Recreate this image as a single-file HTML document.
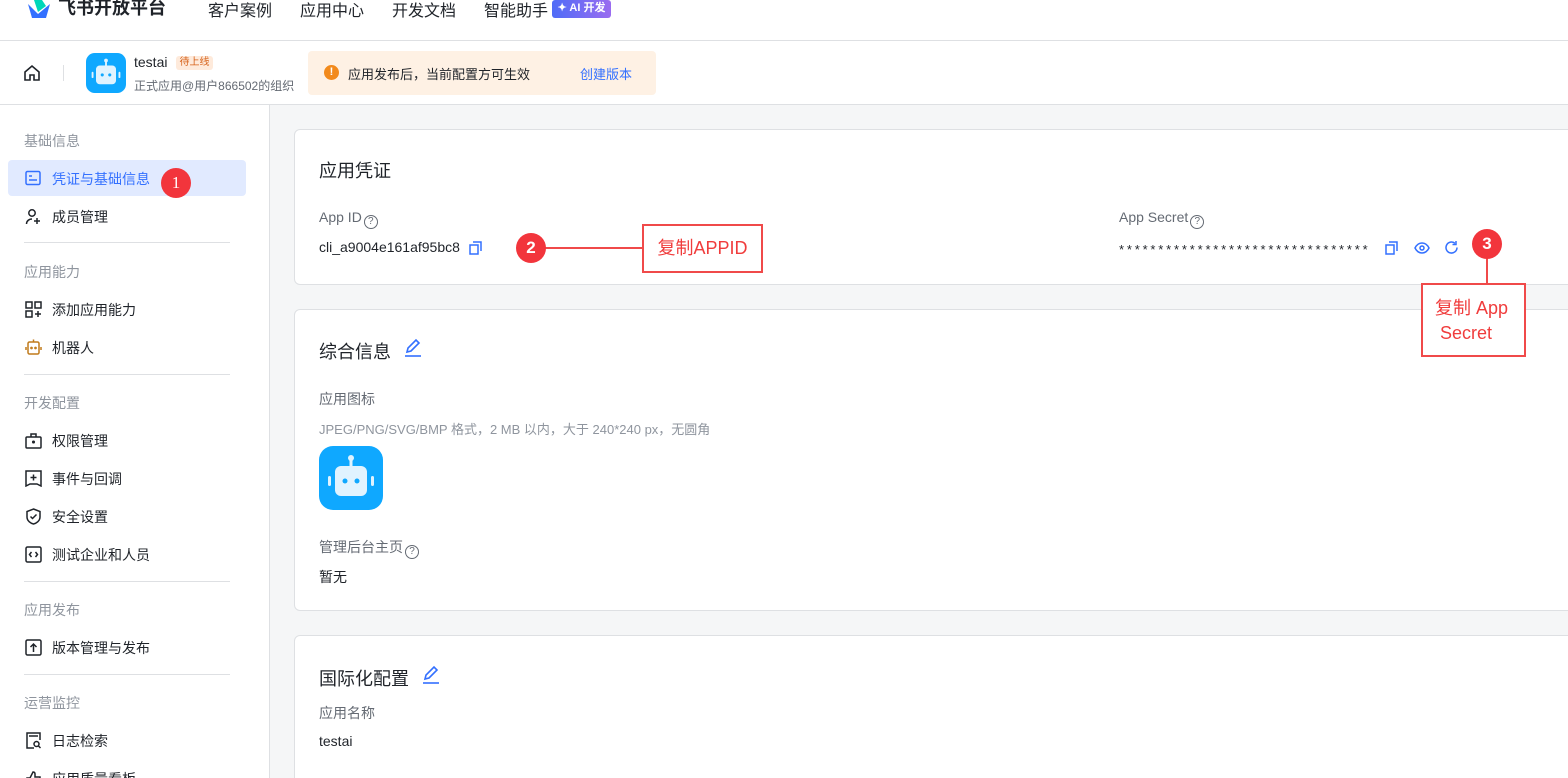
<!DOCTYPE html>
<html style="width:1568px;height:778px;overflow:hidden"><head><meta charset="utf-8"><style>
*{box-sizing:border-box;margin:0;padding:0}
body{width:1568px;height:778px;overflow:hidden;background:#f5f6f7;font-family:"Liberation Sans","Noto Sans CJK SC",sans-serif;color:#1f2329;position:relative}
.a{position:absolute;white-space:nowrap}
.top{position:absolute;left:0;top:0;width:1568px;height:41px;background:#fff;border-bottom:1px solid #dee0e3}
.bar{position:absolute;left:0;top:41px;width:1568px;height:64px;background:#fff;border-bottom:1px solid #dee0e3}
.side{position:absolute;left:0;top:105px;width:270px;height:673px;background:#fff;border-right:1px solid #dee0e3;overflow:hidden}
.card{position:absolute;left:294px;width:1290px;background:#fff;border:1px solid #dee0e3;border-radius:6px}
.sec{font-size:14px;color:#8f959e}
.it{font-size:14px;color:#1f2329}
.hr{position:absolute;left:24px;width:206px;height:1px;background:#dee0e3}
.lbl{font-size:14px;color:#646a73}
.q{display:inline-block;width:14px;height:14px;border:1.3px solid #646a73;border-radius:50%;font-size:10px;line-height:12px;text-align:center;vertical-align:-2px;margin-left:2px}
.red{position:absolute;width:30px;height:30px;border-radius:50%;background:#f2353c;color:#fff;font-weight:bold;font-size:17px;text-align:center;line-height:30px}
.box{position:absolute;border:2px solid #f04a4a;background:#fff;color:#f03c3c;font-size:18px}
svg.ic{position:absolute}
</style></head><body>
<div class="top">
 <svg class="a" style="left:26px;top:0" width="26" height="20" viewBox="0 0 26 20"><path d="M2 4 L12 14 L24 4 L20 18 L6 18Z" fill="#3370ff"/><path d="M8 0 L16 0 L20 6 L12 12Z" fill="#00d6b9"/></svg>
 <div class="a" style="left:58px;top:-6px;font-size:18px;font-weight:bold;color:#1f2329">飞书开放平台</div>
 <div class="a" style="left:208px;top:-3px;font-size:16px">客户案例</div>
 <div class="a" style="left:300px;top:-3px;font-size:16px">应用中心</div>
 <div class="a" style="left:392px;top:-3px;font-size:16px">开发文档</div>
 <div class="a" style="left:484px;top:-3px;font-size:16px">智能助手</div>
 <div class="a" style="left:552px;top:0;width:59px;height:18px;background:linear-gradient(90deg,#4f6cf7,#9a6cf0);border-radius:3px;color:#fff;font-size:11px;font-weight:bold;line-height:17px;text-align:center">✦ AI 开发</div>
</div>
<div class="bar">
 <svg class="ic" style="left:23px;top:23px" width="18" height="18" viewBox="0 0 18 18" fill="none" stroke="#1f2329" stroke-width="1.6"><path d="M2 8 L9 2 L16 8 V16 H11 V11 H7 V16 H2Z"/></svg>
 <div class="a" style="left:63px;top:24px;width:1px;height:16px;background:#dee0e3"></div>
 <svg class="ic" style="left:86px;top:12px" width="40" height="40" viewBox="0 0 64 64"><rect width="64" height="64" rx="14" fill="#0fa8ff"/><line x1="32" y1="12" x2="32" y2="20" stroke="#dff3ff" stroke-width="3"/><circle cx="32" cy="12" r="3" fill="#dff3ff"/><rect x="16" y="20" width="32" height="30" rx="6" fill="#e0f3ff"/><rect x="9" y="30" width="3" height="10" rx="1.5" fill="#e0f3ff"/><rect x="52" y="30" width="3" height="10" rx="1.5" fill="#e0f3ff"/><circle cx="26" cy="35" r="2.5" fill="#0fa8ff"/><circle cx="38" cy="35" r="2.5" fill="#0fa8ff"/></svg>
 <div class="a" style="left:134px;top:13px;font-size:14px">testai</div>
 <div class="a" style="left:176px;top:15px;width:37px;height:14px;background:#feeadb;color:#d6621a;font-size:10px;line-height:14px;text-align:center;border-radius:3px">待上线</div>
 <div class="a" style="left:134px;top:36px;font-size:12px;color:#646a73">正式应用@用户866502的组织</div>
 <div class="a" style="left:308px;top:10px;width:348px;height:44px;background:#fef1e4;border-radius:4px"></div>
 <div class="a" style="left:324px;top:24px;width:15px;height:15px;border-radius:50%;background:#f28a1c;color:#fff;font-size:11px;font-weight:bold;text-align:center;line-height:15px">!</div>
 <div class="a" style="left:348px;top:23px;font-size:13px">应用发布后，当前配置方可生效</div>
 <div class="a" style="left:580px;top:23px;font-size:13px;color:#3370ff">创建版本</div>
</div>
<div class="side">
 <div class="a sec" style="left:24px;top:26px">基础信息</div>
 <div class="a" style="left:8px;top:55px;width:238px;height:36px;background:#e1eaff;border-radius:4px"></div>
 <svg class="ic" style="left:25px;top:65px" width="16" height="16" viewBox="0 0 16 16" fill="none" stroke="#3370ff" stroke-width="1.5"><rect x="1" y="1.5" width="14" height="13" rx="1.5"/><path d="M4 6h3M4 10h8"/></svg>
 <div class="a it" style="left:52px;top:64px;color:#3370ff">凭证与基础信息</div>
 <div class="a it" style="left:52px;top:102px">成员管理</div>
 <svg class="ic" style="left:25px;top:103px" width="17" height="17" viewBox="0 0 17 17" fill="none" stroke="#1f2329" stroke-width="1.5"><circle cx="7" cy="5" r="3.2"/><path d="M1.5 16c0-3 2.5-5 5.5-5M12 10v6M9 13h6"/></svg>
 <div class="hr" style="top:137px"></div>
 <div class="a sec" style="left:24px;top:157px">应用能力</div>
 <svg class="ic" style="left:25px;top:196px" width="17" height="17" viewBox="0 0 17 17" fill="none" stroke="#1f2329" stroke-width="1.5"><rect x="1" y="1" width="6" height="6"/><rect x="10" y="1" width="6" height="6"/><rect x="1" y="10" width="6" height="6"/><path d="M13 10v6M10 13h6"/></svg>
 <div class="a it" style="left:52px;top:195px">添加应用能力</div>
 <svg class="ic" style="left:25px;top:234px" width="17" height="17" viewBox="0 0 17 17" fill="none" stroke="#c07a1a" stroke-width="1.5"><rect x="3" y="3" width="11" height="12" rx="1.5"/><path d="M8.5 0.5v2.5M1 8v3M16 8v3"/><circle cx="6.5" cy="9" r=".6"/><circle cx="10.5" cy="9" r=".6"/></svg>
 <div class="a it" style="left:52px;top:233px">机器人</div>
 <div class="hr" style="top:269px"></div>
 <div class="a sec" style="left:24px;top:288px">开发配置</div>
 <svg class="ic" style="left:25px;top:327px" width="17" height="17" viewBox="0 0 17 17" fill="none" stroke="#1f2329" stroke-width="1.5"><rect x="1" y="5" width="15" height="11" rx="1"/><path d="M6 5V2h5v3"/><circle cx="8.5" cy="10" r=".8" fill="#1f2329"/></svg>
 <div class="a it" style="left:52px;top:326px">权限管理</div>
 <svg class="ic" style="left:25px;top:365px" width="17" height="17" viewBox="0 0 17 17" fill="none" stroke="#1f2329" stroke-width="1.5"><path d="M1 1h15v15l-4-2H5l-4 2Z"/><path d="M8.5 4.5v6M5.5 7.5h6"/></svg>
 <div class="a it" style="left:52px;top:364px">事件与回调</div>
 <svg class="ic" style="left:25px;top:403px" width="17" height="17" viewBox="0 0 17 17" fill="none" stroke="#1f2329" stroke-width="1.5"><path d="M8.5 1 L15 3.5 V9 C15 13 11 15.5 8.5 16 C6 15.5 2 13 2 9 V3.5Z"/><path d="M5.5 8.5l2 2 4-4"/></svg>
 <div class="a it" style="left:52px;top:402px">安全设置</div>
 <svg class="ic" style="left:25px;top:441px" width="17" height="17" viewBox="0 0 17 17" fill="none" stroke="#1f2329" stroke-width="1.5"><rect x="1" y="1" width="15" height="15" rx="1.5"/><path d="M6.5 6l-2 2.5 2 2.5M10.5 6l2 2.5-2 2.5"/></svg>
 <div class="a it" style="left:52px;top:440px">测试企业和人员</div>
 <div class="hr" style="top:476px"></div>
 <div class="a sec" style="left:24px;top:495px">应用发布</div>
 <svg class="ic" style="left:25px;top:534px" width="17" height="17" viewBox="0 0 17 17" fill="none" stroke="#1f2329" stroke-width="1.5"><rect x="1" y="1" width="15" height="15" rx="1.5"/><path d="M8.5 13V5M5.5 8l3-3 3 3"/></svg>
 <div class="a it" style="left:52px;top:533px">版本管理与发布</div>
 <div class="hr" style="top:569px"></div>
 <div class="a sec" style="left:24px;top:588px">运营监控</div>
 <svg class="ic" style="left:25px;top:627px" width="17" height="17" viewBox="0 0 17 17" fill="none" stroke="#1f2329" stroke-width="1.5"><path d="M9 16H2V1h13v7"/><path d="M4 4h9"/><circle cx="11.5" cy="12" r="2.5"/><path d="M13.5 14l2 2"/></svg>
 <div class="a it" style="left:52px;top:626px">日志检索</div>
 <svg class="ic" style="left:25px;top:665px" width="17" height="17" viewBox="0 0 17 17" fill="none" stroke="#1f2329" stroke-width="1.5"><path d="M2 8h3v8H2zM5 8l3-6c1.5 0 2 1 2 2v3h5v4l-2 5H5"/></svg>
 <div class="a it" style="left:52px;top:664px">应用质量看板</div>
 <div class="red" style="left:161px;top:63px;font-family:'Liberation Serif',serif;font-weight:normal">1</div>
</div>

<div class="card" style="top:129px;height:156px">
 <div class="a" style="left:24px;top:27px;font-size:18px">应用凭证</div>
 <div class="a lbl" style="left:24px;top:79px">App ID<span class="q">?</span></div>
 <div class="a" style="left:24px;top:109px;font-size:14px">cli_a9004e161af95bc8</div>
 <svg class="ic" style="left:174px;top:111px" width="13" height="14" viewBox="0 0 13 14" fill="none" stroke="#3370ff" stroke-width="1.5"><rect x="1" y="4" width="8" height="9"/><path d="M4 1h8v9"/></svg>
 <div class="a lbl" style="left:824px;top:79px">App Secret<span class="q">?</span></div>
 <div class="a" style="left:824px;top:112px;font-size:13px;letter-spacing:2.8px;color:#1f2329">********************************</div>
 <svg class="ic" style="left:1090px;top:111px" width="13" height="14" viewBox="0 0 13 14" fill="none" stroke="#3370ff" stroke-width="1.5"><rect x="1" y="4" width="8" height="9"/><path d="M4 1h8v9"/></svg>
 <svg class="ic" style="left:1119px;top:111px" width="16" height="14" viewBox="0 0 16 14" fill="none" stroke="#3370ff" stroke-width="1.5"><path d="M1 7C3 3 6 2 8 2s5 1 7 5c-2 4-5 5-7 5S3 11 1 7Z"/><circle cx="8" cy="7" r="2"/></svg>
 <svg class="ic" style="left:1149px;top:110px" width="15" height="15" viewBox="0 0 15 15" fill="none" stroke="#3370ff" stroke-width="1.5"><path d="M13 7.5A5.5 5.5 0 1 1 11 3.3"/><path d="M12 1v3.5H8.5"/></svg>
</div>

<div class="card" style="top:309px;height:302px">
 <div class="a" style="left:24px;top:28px;font-size:18px">综合信息</div>
 <svg class="ic" style="left:108px;top:28px" width="20" height="20" viewBox="0 0 20 20" fill="none" stroke="#3370ff" stroke-width="1.6"><path d="M4 14l1-4 8-8 3 3-8 8Z"/><path d="M2 18h16"/></svg>
 <div class="a lbl" style="left:24px;top:79px">应用图标</div>
 <div class="a" style="left:24px;top:109px;font-size:13px;color:#8f959e">JPEG/PNG/SVG/BMP 格式，2 MB 以内，大于 240*240 px，无圆角</div>
 <svg class="ic" style="left:24px;top:136px" width="64" height="64" viewBox="0 0 64 64"><rect width="64" height="64" rx="14" fill="#0fa8ff"/><line x1="32" y1="12" x2="32" y2="20" stroke="#dff3ff" stroke-width="3"/><circle cx="32" cy="12" r="3" fill="#dff3ff"/><rect x="16" y="20" width="32" height="30" rx="6" fill="#e0f3ff"/><rect x="9" y="30" width="3" height="10" rx="1.5" fill="#e0f3ff"/><rect x="52" y="30" width="3" height="10" rx="1.5" fill="#e0f3ff"/><circle cx="26" cy="35" r="2.5" fill="#0fa8ff"/><circle cx="38" cy="35" r="2.5" fill="#0fa8ff"/></svg>
 <div class="a lbl" style="left:24px;top:227px">管理后台主页<span class="q">?</span></div>
 <div class="a" style="left:24px;top:257px;font-size:14px">暂无</div>
</div>

<div class="card" style="top:635px;height:160px">
 <div class="a" style="left:24px;top:29px;font-size:18px">国际化配置</div>
 <svg class="ic" style="left:126px;top:29px" width="20" height="20" viewBox="0 0 20 20" fill="none" stroke="#3370ff" stroke-width="1.6"><path d="M4 14l1-4 8-8 3 3-8 8Z"/><path d="M2 18h16"/></svg>
 <div class="a lbl" style="left:24px;top:67px">应用名称</div>
 <div class="a" style="left:24px;top:97px;font-size:14px">testai</div>
</div>

<div class="a" style="left:545px;top:247px;width:98px;height:2px;background:#f04a4a"></div>
<div class="red" style="left:516px;top:233px">2</div>
<div class="box" style="left:642px;top:224px;width:121px;height:49px;line-height:45px;text-align:center">复制APPID</div>
<div class="a" style="left:1486px;top:258px;width:2px;height:26px;background:#f04a4a"></div>
<div class="red" style="left:1472px;top:229px">3</div>
<div class="box" style="left:1421px;top:283px;width:105px;height:74px;line-height:25px;padding:11px 0 0 12px">复制 App<br>&nbsp;Secret</div>
</body></html>
